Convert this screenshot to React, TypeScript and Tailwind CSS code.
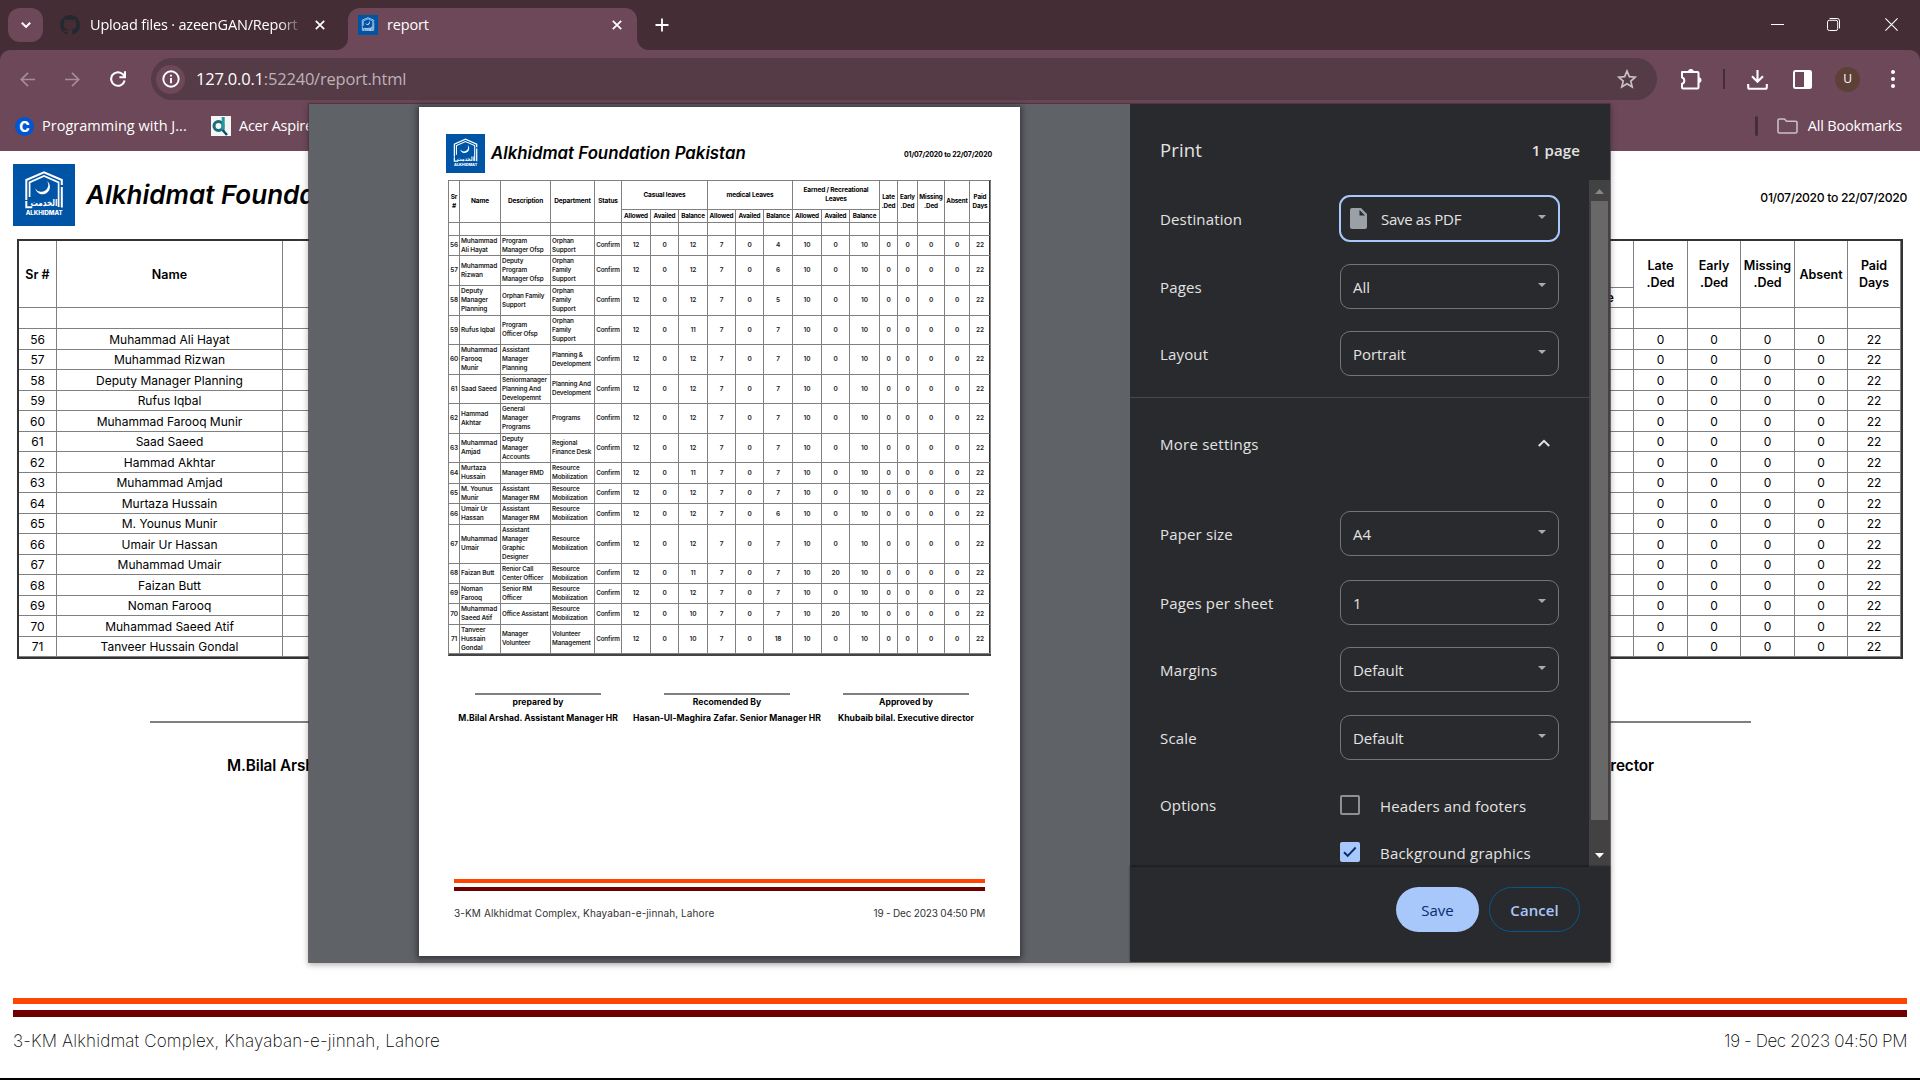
import React from "react";

const EMPLOYEES: [string, string, string, string, number[]][] = [
  ["56", "Muhammad Ali Hayat", "Program|Manager Ofsp", "Orphan|Support", [12, 0, 12, 7, 0, 4, 10, 0, 10]],
  ["57", "Muhammad Rizwan", "Deputy|Program|Manager Ofsp", "Orphan|Family|Support", [12, 0, 12, 7, 0, 6, 10, 0, 10]],
  ["58", "Deputy Manager Planning", "Orphan Family|Support", "Orphan|Family|Support", [12, 0, 12, 7, 0, 5, 10, 0, 10]],
  ["59", "Rufus Iqbal", "Program|Officer Ofsp", "Orphan|Family|Support", [12, 0, 11, 7, 0, 7, 10, 0, 10]],
  ["60", "Muhammad Farooq Munir", "Assistant|Manager|Planning", "Planning &|Development", [12, 0, 12, 7, 0, 7, 10, 0, 10]],
  ["61", "Saad Saeed", "Seniormanager|Planning And|Developemnt", "Planning And|Development", [12, 0, 12, 7, 0, 7, 10, 0, 10]],
  ["62", "Hammad Akhtar", "General|Manager|Programs", "Programs", [12, 0, 12, 7, 0, 7, 10, 0, 10]],
  ["63", "Muhammad Amjad", "Deputy|Manager|Accounts", "Regional|Finance Desk", [12, 0, 12, 7, 0, 7, 10, 0, 10]],
  ["64", "Murtaza Hussain", "Manager RMD", "Resource|Mobilization", [12, 0, 11, 7, 0, 7, 10, 0, 10]],
  ["65", "M. Younus Munir", "Assistant|Manager RM", "Resource|Mobilization", [12, 0, 12, 7, 0, 7, 10, 0, 10]],
  ["66", "Umair Ur Hassan", "Assistant|Manager RM", "Resource|Mobilization", [12, 0, 12, 7, 0, 6, 10, 0, 10]],
  ["67", "Muhammad Umair", "Assistant|Manager|Graphic|Designer", "Resource|Mobilization", [12, 0, 12, 7, 0, 7, 10, 0, 10]],
  ["68", "Faizan Butt", "Renior Call|Center Officer", "Resource|Mobilization", [12, 0, 11, 7, 0, 7, 10, 20, 10]],
  ["69", "Noman Farooq", "Senior RM|Officer", "Resource|Mobilization", [12, 0, 12, 7, 0, 7, 10, 0, 10]],
  ["70", "Muhammad Saeed Atif", "Office Assistant", "Resource|Mobilization", [12, 0, 10, 7, 0, 7, 10, 20, 10]],
  ["71", "Tanveer Hussain Gondal", "Manager|Volunteer", "Volunteer|Management", [12, 0, 10, 7, 0, 18, 10, 0, 10]],
];

const PRINT_NAMES: Record<string, string> = {
  "56": "Muhammad|Ali Hayat",
  "57": "Muhammad|Rizwan",
  "58": "Deputy|Manager|Planning",
  "59": "Rufus Iqbal",
  "60": "Muhammad|Farooq|Munir",
  "61": "Saad Saeed",
  "62": "Hammad|Akhtar",
  "63": "Muhammad|Amjad",
  "64": "Murtaza|Hussain",
  "65": "M. Younus|Munir",
  "66": "Umair Ur|Hassan",
  "67": "Muhammad|Umair",
  "68": "Faizan Butt",
  "69": "Noman|Farooq",
  "70": "Muhammad|Saeed Atif",
  "71": "Tanveer|Hussain|Gondal",
};

function Lines({ text }: { text: string }) {
  return (
    <span className="whitespace-nowrap">
      {text.split("|").map((l, i) => (
        <span key={i} className="block">{l}</span>
      ))}
    </span>
  );
}

function Logo({ className }: { className: string }) {
  return (
    <svg className={className} viewBox="0 0 62 62">
      <rect width="62" height="62" fill="#0054a6" />
      <g fill="none" stroke="#fff">
        <path d="M13.3 36V16L31 8.3 48.8 16v5" strokeWidth="2" />
        <path d="M16.6 33V18.4L31 12l14.6 6.4V43" strokeWidth="1.7" />
        <path d="M48.8 23v20.5" strokeWidth="2" />
        <path d="M13.3 37v6.2h6" strokeWidth="2" />
      </g>
      <path d="M34.3 17.2a7.4 7.4 0 1 1-12 7.2 6.8 6.8 0 1 0 12-7.2z" fill="#fff" />
      <text x="31" y="42.300" textAnchor="middle" fill="#fff" fontSize="9.500" fontWeight="700" fontFamily="DejaVu Sans, sans-serif" textLength="27" lengthAdjust="spacingAndGlyphs">الخدمت</text>
      <text x="31.2" y="50.8" textAnchor="middle" fill="#fff" fontSize="6" fontWeight="800" fontFamily="Inter, sans-serif" textLength="37" lengthAdjust="spacingAndGlyphs">ALKHIDMAT</text>
    </svg>
  );
}

function TabClose() {
  return (
    <svg className="size-[10px] shrink-0" viewBox="0 0 10 10" stroke="#fff" strokeWidth="1.7">
      <path d="M.8.8l8.4 8.4M9.2.8L.8 9.2" />
    </svg>
  );
}

function TabStrip() {
  return (
    <div className="flex h-[50px] items-start bg-[#452d36] text-white">
      <div className="mt-2 ml-2 flex h-[34px] w-[35px] items-center justify-center rounded-[12px] bg-[#6d4858]">
        <svg className="size-[10px]" viewBox="0 0 10 10" fill="none" stroke="#fff" strokeWidth="2"><path d="M.8 2.7L5 6.9l4.2-4.2" /></svg>
      </div>
      <div className="mt-2 ml-[17px] flex h-[34px] w-[265px] items-center">
        <svg className="size-5 shrink-0" viewBox="0 0 16 16" fill="#24292f">
          <path d="M8 0C3.58 0 0 3.58 0 8c0 3.54 2.29 6.53 5.47 7.59.4.07.55-.17.55-.38 0-.19-.01-.82-.01-1.49-2.01.37-2.53-.49-2.69-.94-.09-.23-.48-.94-.82-1.13-.28-.15-.68-.52-.01-.53.63-.01 1.08.58 1.23.82.72 1.21 1.87.87 2.33.66.07-.52.28-.87.51-1.07-1.78-.2-3.64-.89-3.64-3.95 0-.87.31-1.59.82-2.15-.08-.2-.36-1.02.08-2.12 0 0 .67-.21 2.2.82.64-.18 1.32-.27 2-.27s1.36.09 2 .27c1.53-1.04 2.2-.82 2.2-.82.44 1.1.16 1.92.08 2.12.51.56.82 1.27.82 2.15 0 3.07-1.87 3.75-3.65 3.95.29.25.54.73.54 1.48 0 1.07-.01 1.93-.01 2.2 0 .21.15.46.55.38A8.01 8.01 0 0 0 16 8c0-4.42-3.58-8-8-8z" />
        </svg>
        <div className="ml-[10px] w-[210px] overflow-hidden whitespace-nowrap text-[14.500px] tracking-[-0.18px] [mask-image:linear-gradient(to_right,black_90%,rgba(0,0,0,0.15))]">
          Upload files · azeenGAN/Report
        </div>
        <div className="ml-[15px]"><TabClose /></div>
      </div>
      <div className="relative mt-2 ml-[23px] flex h-[42px] w-[289px] items-center rounded-t-[12px] bg-[#6d4858] pb-2">
        <svg className="absolute bottom-0 -left-3 size-3" viewBox="0 0 12 12"><path d="M12 0v12H0A12 12 0 0 0 12 0z" fill="#6d4858" /></svg>
        <svg className="absolute -right-3 bottom-0 size-3" viewBox="0 0 12 12"><path d="M0 0v12h12A12 12 0 0 1 0 0z" fill="#6d4858" /></svg>
        <Logo className="ml-[10px] size-5" />
        <span className="ml-[9px] text-[14.500px] tracking-[-0.18px]">report</span>
        <div className="mr-[15px] ml-auto"><TabClose /></div>
      </div>
      <svg className="mt-[18px] ml-[18px] size-[14px]" viewBox="0 0 14 14" stroke="#fff" strokeWidth="1.8"><path d="M7 .5v13M.5 7h13" /></svg>
      <div className="mt-[24px] ml-auto h-px w-[13px] bg-white" />
      <svg className="mt-[18px] ml-[43px] size-[13px]" viewBox="0 0 13 13" fill="none" stroke="#fff" strokeWidth="1">
        <rect x=".5" y="2.3" width="10.2" height="10.2" rx="1.8" />
        <path d="M2.6.5h7.6a2.3 2.3 0 0 1 2.3 2.3v7.6" />
      </svg>
      <svg className="mt-[18px] mr-[22px] ml-[45px] size-[13px]" viewBox="0 0 13 13" stroke="#fff" strokeWidth="1.1"><path d="M.4.4l12.2 12.2M12.6.4L.4 12.6" /></svg>
    </div>
  );
}

function Toolbar() {
  return (
    <div className="bg-[#452d36]">
      <div className="h-[101px] rounded-t-[10px] bg-[#6d4858] pt-2">
        <div className="flex h-[42px] items-center">
          <svg className="ml-5 size-[15px]" viewBox="0 0 15 15" fill="none" stroke="#a58d98" strokeWidth="1.7"><path d="M15 7.5H1.5M8 .8L1.3 7.5 8 14.2" /></svg>
          <svg className="ml-[30px] size-[15px]" viewBox="0 0 15 15" fill="none" stroke="#a58d98" strokeWidth="1.7"><path d="M0 7.5h13.5M7 .8l6.7 6.7L7 14.2" /></svg>
          <svg className="ml-[30px] size-4" viewBox="0 0 16 16" fill="none" stroke="#fff" strokeWidth="2.1"><path d="M14.6 9.5A6.8 6.8 0 1 1 13 3.4l1.6 1.8" /><path d="M15 .3v5.9H9.4" /></svg>
          <div className="ml-[25px] flex h-[42px] w-[1506px] items-center rounded-full bg-[#553b46]">
            <div className="ml-[5px] flex size-[29px] items-center justify-center rounded-full bg-[#6d4858]">
              <svg className="size-[18px]" viewBox="0 0 18 18"><circle cx="9" cy="9" r="7.7" fill="none" stroke="#fff" strokeWidth="1.9" /><path d="M9 8v5.2M9 4.8v1.8" stroke="#fff" strokeWidth="1.9" /></svg>
            </div>
            <span className="mt-px ml-[11px] text-[16.500px] tracking-[-0.2px] text-[#bfb1b8]"><span className="text-white">127.0.0.1</span>:52240/report.html</span>
            <svg className="mr-5 ml-auto size-5" viewBox="0 0 20 20" fill="none" stroke="#c9c0c4" strokeWidth="1.7"><path d="M10 2l2.3 5.6 6.1.5-4.6 4 1.4 5.9-5.2-3.2L4.800 18l1.400-5.900-4.600-4 6.100-.5z" /></svg>
          </div>
          <svg className="ml-[22px] size-[24px]" viewBox="0 0 24 24" fill="none" stroke="#fff" strokeWidth="2" strokeLinejoin="round">
            <path d="M3 5h15.500a1 1 0 0 1 1 1v14.500a1 1 0 0 1-1 1H4a1 1 0 0 1-1-1v-3.700a3.300 3.300 0 0 0 0-6.300V5z" />
            <path d="M9.300 5a2.600 2.600 0 0 1 5.200 0zM19.500 10.500a2.600 2.600 0 0 1 0 5.200z" fill="#fff" strokeWidth="1" />
          </svg>
          <div className="ml-[20px] h-5 w-[2px] bg-[#452d36]" />
          <svg className="ml-[22px] size-[21px]" viewBox="0 0 21 21" fill="none" stroke="#fff" strokeWidth="2.100"><path d="M10.500 1v11.500M5 7.300l5.500 5.500L16 7.300M1.200 15v3.300a1.500 1.500 0 0 0 1.500 1.500h15.600a1.500 1.500 0 0 0 1.500-1.500V15" /></svg>
          <svg className="ml-[25px] size-[19px]" viewBox="0 0 19 19"><rect x="1" y="1" width="17" height="17" rx="1.500" fill="none" stroke="#fff" strokeWidth="2" /><path d="M11 1h7v17h-7z" fill="#fff" /></svg>
          <div className="ml-[23px] flex size-[25px] items-center justify-center rounded-full bg-[#5d4037] text-[12px] text-white">U</div>
          <svg className="ml-[31px] h-[18px] w-[4px]" viewBox="0 0 4 18" fill="#fff"><circle cx="2" cy="2" r="2" /><circle cx="2" cy="9" r="2" /><circle cx="2" cy="16" r="2" /></svg>
        </div>
        <div className="mt-3 flex h-7 items-center text-[14.500px] text-white">
          <div className="ml-[15px] flex size-[19px] items-center justify-center rounded-full bg-[#0056d2] font-['Inter',sans-serif] text-[14px] font-extrabold">C</div>
          <span className="ml-2 w-[169px] tracking-[0.02px]">Programming with J...</span>
          <svg className="size-5" viewBox="0 0 20 20"><path fill="#f4f6f5" d="M0 0h20v20H0z" /><circle cx="7.500" cy="10" r="4.500" fill="none" stroke="#1a6b7c" strokeWidth="3" /><path d="M12.200 1v14" stroke="#2a97a0" strokeWidth="3" /><path d="M11.500 14l4.500 5" stroke="#154a68" strokeWidth="2.500" /></svg>
          <span className="ml-2 tracking-[-0.25px]">Acer Aspire</span>
          <div className="mr-[19px] ml-auto h-5 w-[3px] rounded bg-[#452d36]" />
          <svg className="h-4 w-[21px]" viewBox="0 0 21 16" fill="none" stroke="#c9c0c4" strokeWidth="1.600"><path d="M1 13.500v-11A1.500 1.500 0 0 1 2.500 1h5l2 2.200h9A1.500 1.500 0 0 1 20 4.700v8.800a1.500 1.500 0 0 1-1.500 1.500h-16A1.500 1.500 0 0 1 1 13.500z" /></svg>
          <span className="mr-[18px] ml-[10px] tracking-[-0.18px]">All Bookmarks</span>
        </div>
      </div>
    </div>
  );
}

function ReportTable() {
  const cell = "flex items-center justify-center border-r border-b border-[#808080] text-center";
  const head = cell + " row-span-2 text-[12.500px] font-semibold";
  return (
    <div className="mx-[17px] grid grid-cols-[38px_226px_1fr_54px_54px_53px_54px_53px_53px] grid-rows-[47px_20px_21px_repeat(7,21px_20px)_21px_20px] border-2 border-[#333] text-[12px] leading-[17px]">
      <div className={head}>Sr #</div>
      <div className={head}>Name</div>
      <div className={head} />
      <div className="border-r border-b border-[#808080]" />
      {["Late .Ded", "Early .Ded", "Missing .Ded", "Absent", "Paid Days"].map((h) => (
        <div key={h} className={head}>{h}</div>
      ))}
      <div className="flex items-center justify-end border-r border-b border-[#808080] pr-[19px] text-[12.500px] font-semibold">Balance</div>
      {Array.from({ length: 9 }, (_, i) => <div key={i} className={cell} />)}
      {EMPLOYEES.map((e) => (
        <React.Fragment key={e[0]}>
          <div className={cell}>{e[0]}</div>
          <div className={cell}>{e[1]}</div>
          <div className={cell} />
          <div className={cell} />
          {[0, 0, 0, 0, 22].map((v, i) => <div key={i} className={cell}>{v}</div>)}
        </React.Fragment>
      ))}
    </div>
  );
}

function ReportPage() {
  return (
    <div className="flex h-[929px] flex-col border-b-2 border-black bg-white font-['Inter',sans-serif] text-black">
      <div className="mt-[13px] flex h-[62px] items-center">
        <Logo className="ml-[13px] size-[62px]" />
        <span className="mb-[2px] ml-[11px] text-[26px] font-semibold italic">Alkhidmat Foundation Pakistan</span>
        <span className="mt-[6px] mr-[13px] ml-auto text-[12.200px] font-medium tracking-[-0.33px]">01/07/2020 to 22/07/2020</span>
      </div>
      <div className="mt-[13px]"><ReportTable /></div>
      <div className="mt-[62px] flex justify-between pr-[169px] pl-[150px]">
        <div className="h-[2px] w-[400px] bg-[#808080]" />
        <div className="h-[2px] w-[400px] bg-[#808080]" />
      </div>
      <div className="mt-[31px] flex h-6 items-center justify-between pr-[266px] pl-[227px] text-[15.300px] font-semibold tracking-[-0.1px]">
        <span>M.Bilal Arshad. Assistant Manager HR</span>
        <span>Khubaib bilal. Executive director</span>
      </div>
      <div className="mx-[13px] mt-auto h-[6px] shrink-0 bg-[#ff4500]" />
      <div className="mx-[13px] mt-[6px] h-[7px] shrink-0 bg-[#700000]" />
      <div className="mx-[13px] mt-[11px] mb-[22px] flex h-7 shrink-0 items-center justify-between text-[17px] font-extralight">
        <span className="tracking-[0.15px]">3-KM Alkhidmat Complex, Khayaban-e-jinnah, Lahore</span>
        <span className="tracking-[-0.4px]">19 - Dec 2023 04:50 PM</span>
      </div>
    </div>
  );
}

function PrintTable() {
  const line = "flex items-center border-r border-b border-[#808080]";
  const mid = line + " justify-center text-center";
  const head = mid + " font-bold text-black";
  return (
    <div className="mt-[7px] ml-[29px] grid w-[543px] grid-cols-[11px_41px_50px_44px_27px_29px_28px_29px_28px_28px_29px_29px_28px_30px_18px_20px_27px_25px_21px] grid-rows-[29px_13px_13px_20px_30px_30px_29px_30px_29px_30px_29px_21px_20px_21px_39px_20px_20px_21px_29px] border-t border-r-2 border-b-2 border-l border-t-[#808080] border-r-[#333] border-b-[#444] border-l-[#808080] text-[6.500px] leading-[9px] font-semibold tracking-[-0.14px] text-[#222]">
      {["Sr|#", "Name", "Description", "Department", "Status"].map((h) => (
        <div key={h} className={head + " row-span-2"}><Lines text={h} /></div>
      ))}
      {["Casual leaves", "medical Leaves", "Earned / Recreational|Leaves"].map((h) => (
        <div key={h} className={head + " col-span-3"}><Lines text={h} /></div>
      ))}
      {["Late|.Ded", "Early|.Ded", "Missing|.Ded", "Absent", "Paid|Days"].map((h) => (
        <div key={h} className={head + " row-span-2 text-[6.300px]"}><Lines text={h} /></div>
      ))}
      {Array.from({ length: 9 }, (_, i) => (
        <div key={i} className={head + " text-[6.300px]"}>{["Allowed", "Availed", "Balance"][i % 3]}</div>
      ))}
      {Array.from({ length: 19 }, (_, i) => <div key={i} className={line} />)}
      {EMPLOYEES.map(([sr, , desc, dept, nums]) => (
        <React.Fragment key={sr}>
          <div className={mid}>{sr}</div>
          <div className={line + " pl-px"}><Lines text={PRINT_NAMES[sr]} /></div>
          <div className={line + " pl-px text-[6.300px]"}><Lines text={desc} /></div>
          <div className={line + " pl-px text-[6.300px]"}><Lines text={dept} /></div>
          <div className={mid + " text-[6.300px]"}>Confirm</div>
          {[...nums, 0, 0, 0, 0, 22].map((n, i) => <div key={i} className={mid}>{n}</div>)}
        </React.Fragment>
      ))}
    </div>
  );
}

function PrintPreview() {
  return (
    <div className="w-[821px] shrink-0 bg-[#5f6267] pt-[3px] pl-[110px]">
      <div className="flex h-[849px] w-[601px] flex-col bg-white font-['Inter',sans-serif] text-black shadow-[0_1px_6px_2px_rgba(30,32,36,0.65)]">
        <div className="mt-[27px] flex h-[39px] shrink-0 items-center">
          <Logo className="ml-[27px] size-[39px]" />
          <span className="ml-[6px] text-[16.800px] font-semibold tracking-[0.02px] italic">Alkhidmat Foundation Pakistan</span>
          <span className="mt-[4px] mr-[28px] ml-auto text-[7px] font-bold tracking-[-0.14px]">01/07/2020 to 22/07/2020</span>
        </div>
        <PrintTable />
        <div className="mt-[37px] flex text-center text-[8.600px] leading-4 font-bold tracking-[0.02px] whitespace-nowrap">
          {[
            ["prepared by", "M.Bilal Arshad. Assistant Manager HR", "ml-[38px] w-[162px]"],
            ["Recomended By", "Hasan-Ul-Maghira Zafar. Senior Manager HR", "ml-[11px] w-[194px]"],
            ["Approved by", "Khubaib bilal. Executive director", "ml-[12px] w-[140px]"],
          ].map(([role, who, box]) => (
            <div key={role} className={"flex flex-col items-center " + box}>
              <div className="h-[2px] w-[126px] bg-[#808080]" />
              <span className="-mt-px">{role}</span>
              <span>{who}</span>
            </div>
          ))}
        </div>
        <div className="mt-auto ml-[35px] h-[4px] w-[531px] shrink-0 bg-[#ff4500]" />
        <div className="mt-[4px] ml-[35px] h-[4px] w-[531px] shrink-0 bg-[#700000]" />
        <div className="mt-[13px] mb-[34px] ml-[35px] flex h-[18px] w-[531px] shrink-0 items-center justify-between text-[10px] text-[#333]">
          <span className="tracking-[0.11px]">3-KM Alkhidmat Complex, Khayaban-e-jinnah, Lahore</span>
          <span className="tracking-[-0.2px]">19 - Dec 2023 04:50 PM</span>
        </div>
      </div>
    </div>
  );
}

function Setting({ label, value, gap }: { label: string; value: string; gap: string }) {
  return (
    <div className={"flex h-[45px] shrink-0 items-center pl-[30px] " + gap}>
      <span className="mt-[2px] w-[180px]">{label}</span>
      <div className="flex h-full w-[219px] items-center justify-between rounded-[10px] border border-[#757575] pr-3 pl-3">
        <span className="mt-[2px] tracking-[-0.05px]">{value}</span>
        <svg className="mb-1 h-1 w-2" viewBox="0 0 8 4" fill="#aaa"><path d="M0 0h8L4 4z" /></svg>
      </div>
    </div>
  );
}

function PrintPanel() {
  return (
    <div className="flex flex-1 flex-col bg-[#292a2d] text-[15px] tracking-[0.15px] text-[#e3e3e3]">
      <div className="flex h-[76px] shrink-0 items-center justify-between pt-4 pr-[30px] pl-[30px]">
        <span className="text-[18.500px]">Print</span>
        <span className="font-semibold">1 page</span>
      </div>
      <div className="flex h-[687px] shrink-0">
        <div className="flex flex-1 flex-col overflow-hidden pt-[15px]">
          <div className="flex h-[47px] shrink-0 items-center pl-[30px]">
            <span className="mt-[2px] w-[179px]">Destination</span>
            <div className="flex h-full w-[221px] items-center rounded-[11px] border-2 border-[#a8c7fa] pr-3 pl-[9px]">
              <svg className="h-[21px] w-[17px]" viewBox="0 0 17 21"><path d="M2 0h9l6 6v13a2 2 0 0 1-2 2H2a2 2 0 0 1-2-2V2a2 2 0 0 1 2-2z" fill="#9aa0a6" /><path d="M9.500 2v5.500H15z" fill="#292a2d" /></svg>
              <span className="mt-[2px] ml-[14px] tracking-[-0.3px]">Save as PDF</span>
              <svg className="mb-1 ml-auto h-1 w-2" viewBox="0 0 8 4" fill="#aaa"><path d="M0 0h8L4 4z" /></svg>
            </div>
          </div>
          <Setting label="Pages" value="All" gap="mt-[22px]" />
          <Setting label="Layout" value="Portrait" gap="mt-[22px]" />
          <div className="mt-[21px] h-px shrink-0 bg-[#47484b]" />
          <div className="flex h-[92px] shrink-0 items-center justify-between pr-[39px] pl-[30px]">
            <span className="tracking-[0.25px]">More settings</span>
            <svg className="mb-[2px] h-2 w-3" viewBox="0 0 12 8" fill="none" stroke="#e3e3e3" strokeWidth="2"><path d="M.8 7L6 1.800 11.200 7" /></svg>
          </div>
          <Setting label="Paper size" value="A4" gap="mt-[21px]" />
          <Setting label="Pages per sheet" value="1" gap="mt-[24px]" />
          <Setting label="Margins" value="Default" gap="mt-[22px]" />
          <Setting label="Scale" value="Default" gap="mt-[23px]" />
          <div className="mt-[35px] flex h-5 shrink-0 items-center pl-[30px]">
            <span className="w-[180px]">Options</span>
            <div className="size-5 rounded-[2px] border-2 border-[#8f8f8f]" />
            <span className="mt-[2px] ml-5">Headers and footers</span>
          </div>
          <div className="mt-[27px] flex h-5 shrink-0 items-center pl-[210px]">
            <svg className="size-5" viewBox="0 0 20 20"><rect width="20" height="20" rx="2" fill="#a8c7fa" /><path d="M4 10.200l3.700 3.600 8-8.300" fill="none" stroke="#062e6f" strokeWidth="1.900" /></svg>
            <span className="mt-[2px] ml-5 tracking-[0.2px]">Background graphics</span>
          </div>
        </div>
        <div className="flex w-[21px] flex-col items-center bg-[#424242]">
          <svg className="mt-[9px] h-[5px] w-[9px] shrink-0" viewBox="0 0 9 5" fill="#868686"><path d="M0 5h9L4.500 0z" /></svg>
          <div className="mt-[7px] h-[619px] w-[17px] shrink-0 bg-[#686868]" />
          <svg className="mt-[33px] h-[5px] w-[9px] shrink-0" viewBox="0 0 9 5" fill="#fff"><path d="M0 0h9L4.500 5z" /></svg>
        </div>
      </div>
      <div className="flex flex-1 justify-end gap-[10px] pt-5 pr-[30px] font-semibold tracking-[0.05px] shadow-[0_-1px_2px_rgba(0,0,0,0.45)]">
        <div className="flex h-[45px] w-[83px] items-center justify-center rounded-full bg-[#a8c7fa] pt-px font-medium text-[#062e6f]">Save</div>
        <div className="flex h-[45px] w-[91px] items-center justify-center rounded-full border border-[#07588a] pt-px text-[#a8c7fa]">Cancel</div>
      </div>
    </div>
  );
}

export default function App() {
  return (
    <div className="relative h-[1080px] w-[1920px] overflow-hidden font-['Open_Sans',sans-serif]">
      <TabStrip />
      <Toolbar />
      <ReportPage />
      <div className="absolute top-[104px] left-[309px] flex h-[858px] w-[1301px] overflow-visible shadow-[0_0_0_1px_rgba(75,50,62,0.7),0_2px_6px_1px_rgba(0,0,0,0.3)]">
        <PrintPreview />
        <PrintPanel />
      </div>
    </div>
  );
}
